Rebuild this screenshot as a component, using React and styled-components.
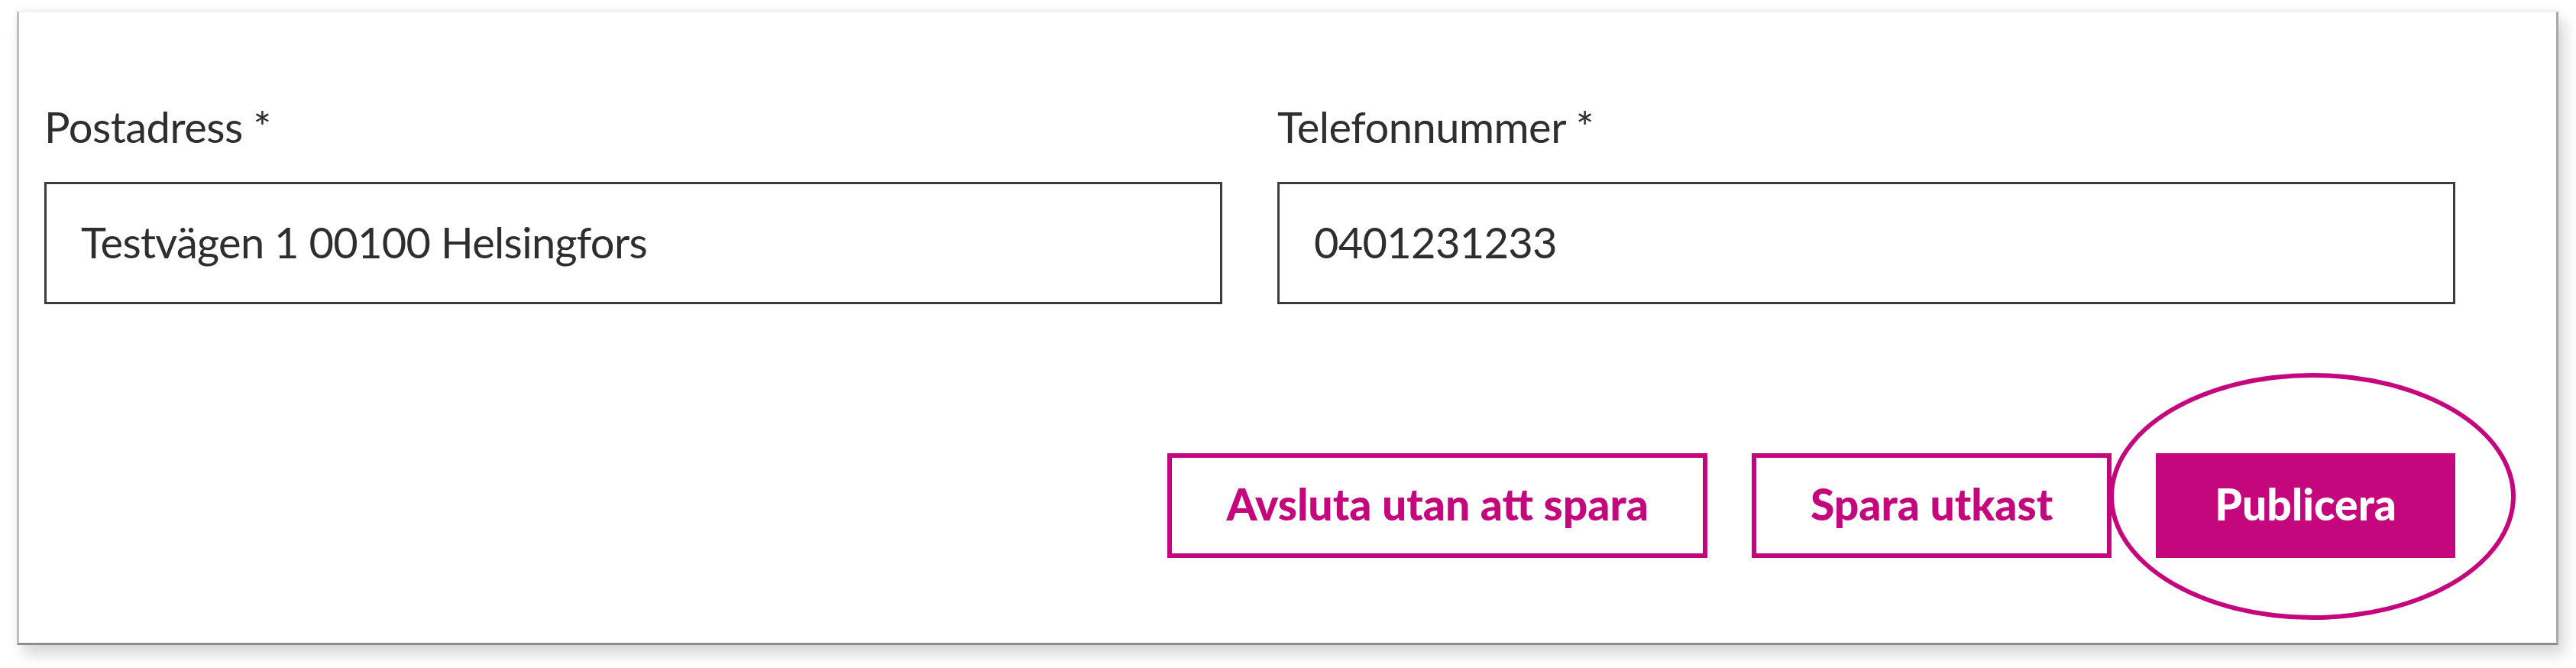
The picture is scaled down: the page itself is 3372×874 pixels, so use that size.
import React from 'react'
import styled, { createGlobalStyle } from 'styled-components'

const GlobalStyle = createGlobalStyle`
  html, body {
    margin: 0;
    padding: 0;
    background: #ffffff;
  }
  body {
    font-family: 'Lato', 'Liberation Sans', sans-serif;
    color: #2e2e2e;
  }
  * {
    box-sizing: border-box;
  }
`

const magenta = '#c5077e'

function App() {
  return (
    <Page>
      <GlobalStyle />
      <Card>
        <FieldRow>
          <Field>
            <Label htmlFor='postadress'>Postadress *</Label>
            <Input id='postadress' defaultValue='Testvägen 1 00100 Helsingfors' />
          </Field>
          <Field>
            <Label htmlFor='telefon'>Telefonnummer *</Label>
            <Input id='telefon' defaultValue='0401231233' />
          </Field>
        </FieldRow>
        <Actions>
          <Button>Avsluta utan att spara</Button>
          <Button>Spara utkast</Button>
          <Highlight>
            <Button primary>Publicera</Button>
            <Circle />
          </Highlight>
        </Actions>
      </Card>
    </Page>
  )
}

const Page = styled.div`
  padding: 15px 23px 27px 22px;
`

const Card = styled.div`
  background: #ffffff;
  border-top: 1px solid #ececec;
  border-left: 3px solid #bcbcbc;
  border-right: 3px solid #a9a9a9;
  border-bottom: 3px solid #8e8e8e;
  box-shadow: 8px 12px 18px rgba(0, 0, 0, 0.16), 0 -3px 8px rgba(0, 0, 0, 0.05);
  padding: 116px 132px 111px 33px;
`

const FieldRow = styled.div`
  display: grid;
  grid-template-columns: 1fr 1fr;
  column-gap: 72px;
`

const Field = styled.div`
  display: flex;
  flex-direction: column;
  gap: 39px;
`

const Label = styled.label`
  font-size: 56px;
  line-height: 1.2;
  font-weight: 400;
  color: #2e2e2e;
  letter-spacing: -0.5px;
`

const Input = styled.input`
  height: 160px;
  width: 100%;
  border: 3px solid #3c3c3c;
  border-radius: 0;
  padding: 0 0 4px 45px;
  font-family: 'Lato', 'Liberation Sans', sans-serif;
  font-size: 56px;
  color: #2e2e2e;
  letter-spacing: -0.7px;
  background: #ffffff;
  outline: none;
`

const Actions = styled.div`
  display: flex;
  justify-content: flex-end;
  align-items: center;
  gap: 58px;
  margin-top: 195px;
`

const Button = styled.button`
  height: 137px;
  padding: 0 71px 6px;
  border: 6px solid ${magenta};
  border-radius: 0;
  background: ${({ primary }) => (primary ? magenta : '#ffffff')};
  color: ${({ primary }) => (primary ? '#ffffff' : magenta)};
  font-family: 'Lato', 'Liberation Sans', sans-serif;
  font-size: 57px;
  font-weight: 900;
  letter-spacing: 0;
  cursor: pointer;
`

const Highlight = styled.div`
  position: relative;
  display: flex;
`

const Circle = styled.div`
  position: absolute;
  left: -61px;
  top: -105px;
  width: 532px;
  height: 323px;
  border: 6px solid ${magenta};
  border-radius: 50%;
  pointer-events: none;
`

export default App
